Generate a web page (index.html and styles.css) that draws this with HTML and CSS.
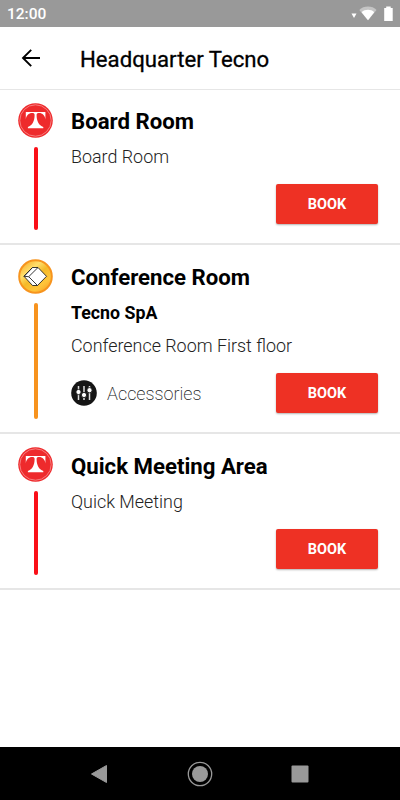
FILE: index.html
```html
<!DOCTYPE html>
<html lang="en">
<head>
  <meta charset="UTF-8" />
  <meta name="viewport" content="width=device-width, initial-scale=1.0" />
  <title>Headquarter Tecno</title>
  <link rel="stylesheet" href="styles.css">
</head>
<body>
  <svg width="0" height="0" class="defs">
    <symbol id="logo-tecno" viewBox="0 0 35 35">
      <circle cx="17.5" cy="17.5" r="17.3" fill="#ee2a2c" />
      <circle cx="17.5" cy="17.5" r="15.7" fill="none" stroke="#f9a0a0" stroke-width="0.7" />
      <path d="M7.800 9h19.600v7.500C27 12.500 24.500 10 21 10c-1.600 0-2.400.5-2.400 2 0 6 2.300 10.500 6.700 12v1.200H9.900V24c4.400-1.500 6.700-6 6.700-12 0-1.500-.8-2-2.400-2C10.700 10 8.200 12.500 7.800 16.500z" fill="#fff" />
    </symbol>
  </svg>

  <div class="status-bar">
    <span class="clock">12:00</span>
    <svg class="status-icons" width="44" height="16" viewBox="0 0 44 16">
      <path d="M1.500 7.500h5l-2.500 4.500z" fill="#fff" />
      <path d="M9.300 4C13.500-.6 22.500-.6 26.500 4L18 14.300z" fill="#c4c4c4" />
      <path d="M11.600 6.200c3.400-3.200 9.400-3.200 12.600 0L18 14.300z" fill="#fff" />
      <path d="M34.200 2h2V.5h4.500V2h2v13h-8.500z" fill="#fff" />
    </svg>
  </div>

  <header class="header">
    <svg class="back" width="20" height="20" viewBox="0 0 20 20">
      <path d="M19 10H2M10.200 1.800L2 10l8.200 8.200" fill="none" stroke="#000" stroke-width="1.900" />
    </svg>
    <h1>Headquarter Tecno</h1>
  </header>

  <main class="rooms">
    <section class="room">
      <div class="side">
        <svg width="35" height="35"><use href="#logo-tecno" /></svg>
        <div class="line"></div>
      </div>
      <div class="content">
        <h2>Board Room</h2>
        <p>Board Room</p>
        <div class="actions"><button class="btn">BOOK</button></div>
      </div>
    </section>

    <section class="room conference">
      <div class="side">
        <svg width="35" height="35" viewBox="0 0 35 35">
          <defs>
            <linearGradient id="gold" x1="0.1" y1="0" x2="0.9" y2="1">
              <stop offset="0" stop-color="#f7a51d" />
              <stop offset="0.3" stop-color="#ffdf6c" />
              <stop offset="0.5" stop-color="#f5ba28" />
              <stop offset="0.75" stop-color="#ffc53b" />
              <stop offset="1" stop-color="#f79a20" />
            </linearGradient>
          </defs>
          <circle cx="17.5" cy="17.5" r="16.3" fill="url(#gold)" stroke="#f7941e" stroke-width="2" />
          <path d="M6 17.300L14.500 8.500H20L28.500 17.300 19.500 26.500h-5z" fill="#fff" stroke="#222" stroke-width="0.9" />
          <path d="M20 8.500L10.700 17.700 19.500 26.500M14.500 8.500L6 17.300l4.700.4" fill="none" stroke="#222" stroke-width="0.9" />
        </svg>
        <div class="line"></div>
      </div>
      <div class="content">
        <h2>Conference Room</h2>
        <h3>Tecno SpA</h3>
        <p>Conference Room First floor</p>
        <div class="actions">
          <div class="accessories">
            <svg width="26" height="26" viewBox="0 0 26 26">
              <circle cx="13" cy="13" r="12.800" fill="#151515" />
              <path d="M7.500 6v14M13 6v14M18.500 6v14" stroke="#ddd" stroke-width="1.500" />
              <g fill="#fff" stroke="#151515" stroke-width="0.9">
                <circle cx="7.500" cy="12" r="2.600" />
                <circle cx="13" cy="15" r="2.600" />
                <circle cx="18.500" cy="10.200" r="2.600" />
              </g>
            </svg>
            <span>Accessories</span>
          </div>
          <button class="btn">BOOK</button>
        </div>
      </div>
    </section>

    <section class="room">
      <div class="side">
        <svg width="35" height="35"><use href="#logo-tecno" /></svg>
        <div class="line"></div>
      </div>
      <div class="content">
        <h2>Quick Meeting Area</h2>
        <p>Quick Meeting</p>
        <div class="actions"><button class="btn">BOOK</button></div>
      </div>
    </section>
  </main>

  <nav class="nav-bar">
    <svg width="26" height="26" viewBox="0 0 26 26">
      <path d="M4.500 13L19.500 4.500v17z" fill="#999" stroke="#999" stroke-linejoin="round" />
    </svg>
    <svg width="26" height="26" viewBox="0 0 26 26">
      <circle cx="13" cy="13" r="11.700" fill="none" stroke="#999" stroke-width="1.300" />
      <circle cx="13" cy="13" r="8" fill="#999" />
    </svg>
    <svg width="26" height="26" viewBox="0 0 26 26">
      <rect x="4.500" y="4.500" width="17" height="17" rx="1" fill="#999" />
    </svg>
  </nav>
</body>
</html>
```
FILE: styles.css
```css
* {
  box-sizing: border-box;
  margin: 0;
  padding: 0;
}
body {
  font-family: Roboto, sans-serif;
  background: #fff;
  color: #000;
  width: 400px;
  height: 800px;
  display: flex;
  flex-direction: column;
  overflow: hidden;
}
svg {
  display: block;
  flex: none;
}
.defs {
  position: absolute;
}
.status-bar {
  height: 27px;
  flex: none;
  background: #999;
  color: #fff;
  display: flex;
  align-items: center;
  justify-content: space-between;
  padding: 0 6px 0 7px;
}
.clock {
  padding-top: 1px;
  font-size: 15.5px;
  font-weight: 500;
}
.header {
  height: 63px;
  flex: none;
  display: flex;
  align-items: center;
  padding-left: 21px;
  border-bottom: 1px solid #e6e6e6;
}
.header h1 {
  margin-left: 39px;
  padding-top: 1px;
  font-size: 22.2px;
  font-weight: 400;
  line-height: 26px;
  -webkit-text-stroke: 0.3px #000;
}
.rooms {
  flex: 1;
}
.room {
  height: 155px;
  display: flex;
  padding: 13px 22px 13px 18px;
  border-bottom: 2px solid #e6e6e6;
}
.room:last-child {
  height: 156px;
}
.room.conference {
  height: 189px;
}
.side {
  width: 35px;
  margin-right: 18px;
  display: flex;
  flex-direction: column;
  align-items: center;
}
.line {
  flex: 1;
  width: 4px;
  margin-top: 9px;
  border-radius: 2px;
  background: #fa0f18;
}
.conference .side {
  padding-top: 1px;
}
.conference .line {
  background: #f7931e;
}
.content {
  flex: 1;
  display: flex;
  flex-direction: column;
}
.room h2 {
  font-size: 22.2px;
  font-weight: 700;
  line-height: 36px;
}
.conference h2,
.room:last-child h2 {
  padding-top: 1px;
}
.room h3 {
  font-size: 17.8px;
  font-weight: 700;
  line-height: 35px;
}
.room p {
  font-size: 17.9px;
  font-weight: 300;
  line-height: 35px;
  color: #222;
}
.conference p {
  line-height: 31px;
}
.actions {
  margin-top: auto;
  margin-bottom: 6px;
  display: flex;
  align-items: center;
}
.accessories {
  display: flex;
  align-items: center;
  gap: 10px;
  font-size: 18px;
  font-weight: 200;
  color: #222;
}
.btn {
  width: 102px;
  height: 40px;
  margin-left: auto;
  border: none;
  border-radius: 2px;
  background: #ee3124;
  color: #fff;
  font-family: inherit;
  font-size: 14.5px;
  font-weight: 700;
  box-shadow: 0 1px 2px rgba(0, 0, 0, 0.3);
}
.nav-bar {
  height: 53px;
  flex: none;
  background: #000;
  display: flex;
  align-items: center;
  justify-content: center;
  gap: 74px;
}
```
